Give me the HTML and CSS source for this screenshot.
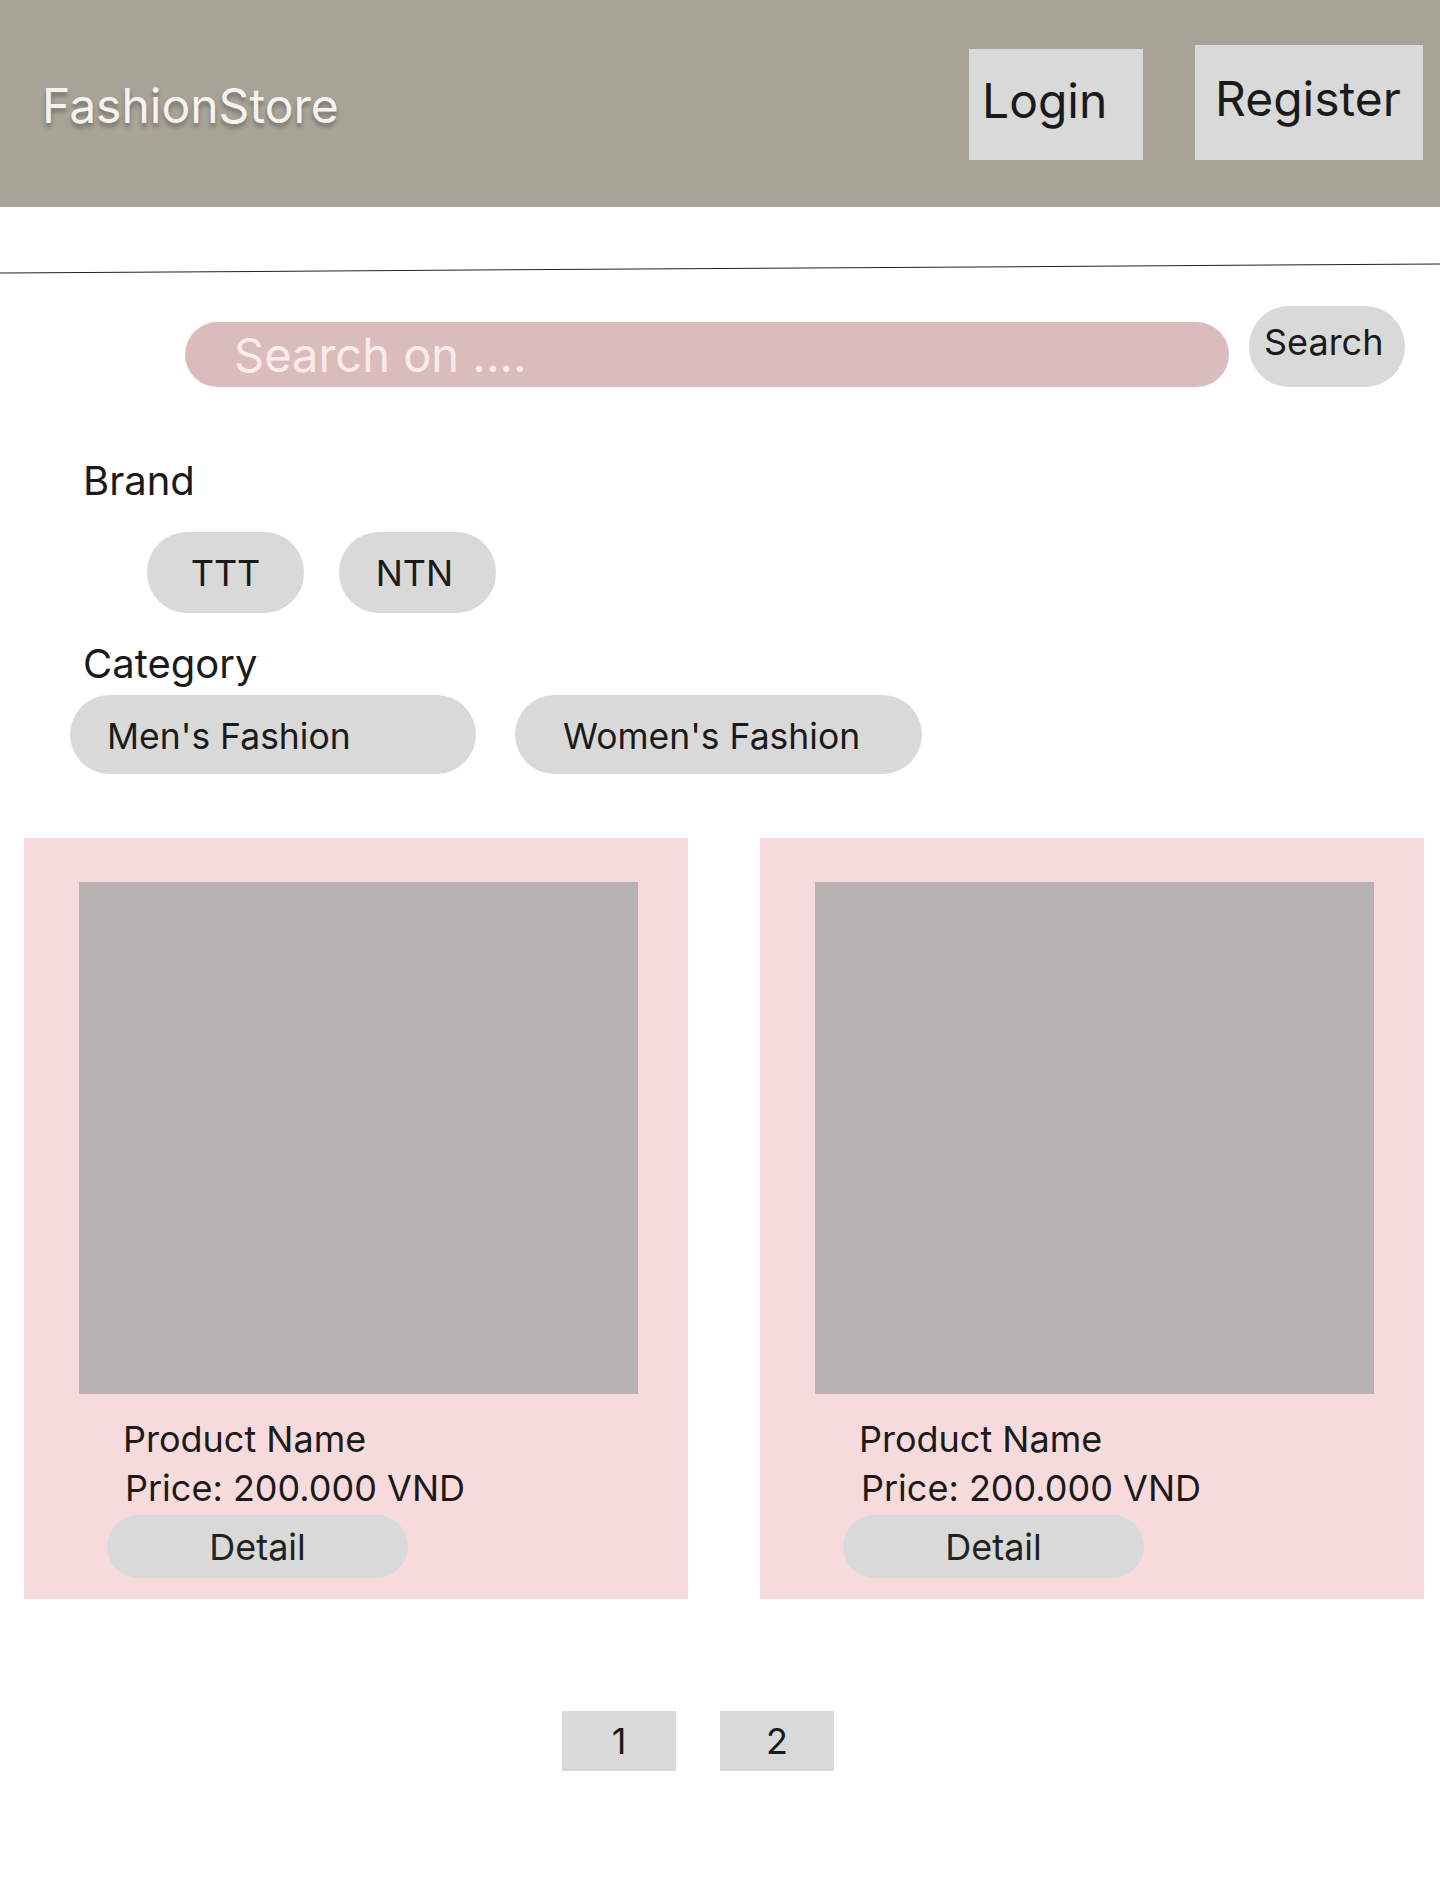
FILE: index.html
```html
<!DOCTYPE html>
<html lang="en">
<head>
<meta charset="utf-8">
<title>FashionStore</title>
<link rel="stylesheet" href="styles.css">
</head>
<body>
<header class="topbar">
  <div class="logo">FashionStore</div>
  <nav class="auth">
    <a class="auth-btn login" href="#">Login</a>
    <a class="auth-btn register" href="#">Register</a>
  </nav>
</header>
<div class="divider"></div>
<div class="search-row">
  <div class="search-input">Search on ....</div>
  <button class="search-btn">Search</button>
</div>
<section class="filters">
  <div class="filter-label">Brand</div>
  <div class="chips brand-chips">
    <span class="chip brand">TTT</span>
    <span class="chip brand ntn">NTN</span>
  </div>
  <div class="filter-label cat-label">Category</div>
  <div class="chips cat-chips">
    <span class="chip cat men">Men's Fashion</span>
    <span class="chip cat women">Women's Fashion</span>
  </div>
</section>
<section class="products">
  <article class="card">
    <div class="thumb"></div>
    <div class="name">Product Name</div>
    <div class="price">Price: 200.000 VND</div>
    <button class="detail">Detail</button>
  </article>
  <article class="card">
    <div class="thumb"></div>
    <div class="name">Product Name</div>
    <div class="price">Price: 200.000 VND</div>
    <button class="detail">Detail</button>
  </article>
</section>
<nav class="pager">
  <span class="page">1</span>
  <span class="page">2</span>
</nav>
</body>
</html>
```

FILE: styles.css
```css
* { box-sizing: border-box; }
body {
  margin: 0;
  font-family: Inter, "Noto Sans", sans-serif;
  color: #1a1a1a;
  background: #fff;
}
.topbar {
  height: 207px;
  background: #a7a397;
  display: flex;
  align-items: flex-end;
  justify-content: space-between;
  padding: 0 17px 47px 42px;
}
.logo {
  align-self: flex-end;
  font-size: 48px;
  line-height: 58px;
  color: #f7f2f2;
  text-shadow: 0 4px 4px rgba(0,0,0,0.3);
  margin-bottom: 25px;
}
.auth { display: flex; align-items: flex-end; gap: 52px; }
.auth-btn {
  display: flex;
  align-items: center;
  background: #d9d9d9;
  color: #1a1a1a;
  text-decoration: none;
  font-size: 48px;
  padding-bottom: 8px;
}
.login { width: 174px; height: 111px; padding-left: 13px; }
.register { width: 228px; height: 115px; padding-left: 20px; }
.divider {
  height: 1px;
  background: #222;
  margin-top: 61px;
  transform: rotate(-0.36deg);
}
.search-row {
  display: flex;
  align-items: flex-end;
  gap: 20px;
  margin-top: 37px;
  padding-left: 185px;
}
.search-input {
  width: 1044px;
  height: 65px;
  border-radius: 33px;
  background: #dbbcbd;
  color: #fdeaea;
  font-size: 47px;
  line-height: 65px;
  padding-left: 49px;
}
.search-btn {
  width: 156px;
  height: 81px;
  border: none;
  border-radius: 40px;
  background: #d9d9d9;
  font-family: inherit;
  font-size: 36px;
  color: #1a1a1a;
  text-align: left;
  padding: 0 0 10px 15px;
}
.filters { padding-left: 83px; }
.filter-label {
  font-size: 40px;
  line-height: 46px;
  height: 46px;
  margin-top: 71px;
}
.cat-label { margin-top: 28px; }
.chips { display: flex; }
.brand-chips { margin-top: 28px; padding-left: 64px; gap: 35px; }
.cat-chips { margin-top: 8px; margin-left: -13px; gap: 39px; }
.chip {
  display: flex;
  align-items: center;
  background: #d9d9d9;
  font-size: 36px;
}
.brand {
  width: 157px;
  height: 81px;
  border-radius: 40px;
  justify-content: center;
}
.ntn { padding-right: 6px; }
.cat {
  width: 406px;
  height: 79px;
  border-radius: 40px;
  font-size: 35.5px;
  padding-top: 4px;
}
.men { padding-left: 37px; }
.women { width: 407px; padding-left: 48px; }
.products {
  display: flex;
  gap: 72px;
  margin-top: 64px;
  padding-left: 24px;
}
.card {
  width: 664px;
  height: 761px;
  background: #f7dadb;
  padding: 44px 0 0 55px;
}
.thumb {
  width: 559px;
  height: 512px;
  background: #b8b2b2;
}
.name {
  font-size: 36px;
  line-height: 44px;
  margin-top: 23px;
  padding-left: 44px;
}
.price {
  font-size: 36px;
  line-height: 44px;
  margin-top: 5px;
  padding-left: 46px;
}
.detail {
  display: block;
  width: 301px;
  height: 63px;
  border: none;
  border-radius: 32px;
  background: #d9d9d9;
  font-family: inherit;
  font-size: 36px;
  color: #222;
  margin: 5px 0 0 28px;
  padding: 0;
}
.pager {
  display: flex;
  gap: 44px;
  margin-top: 112px;
  padding-left: 562px;
}
.page {
  width: 114px;
  height: 60px;
  background: #d9d9d9;
  display: flex;
  align-items: center;
  justify-content: center;
  font-size: 36px;
}
```
